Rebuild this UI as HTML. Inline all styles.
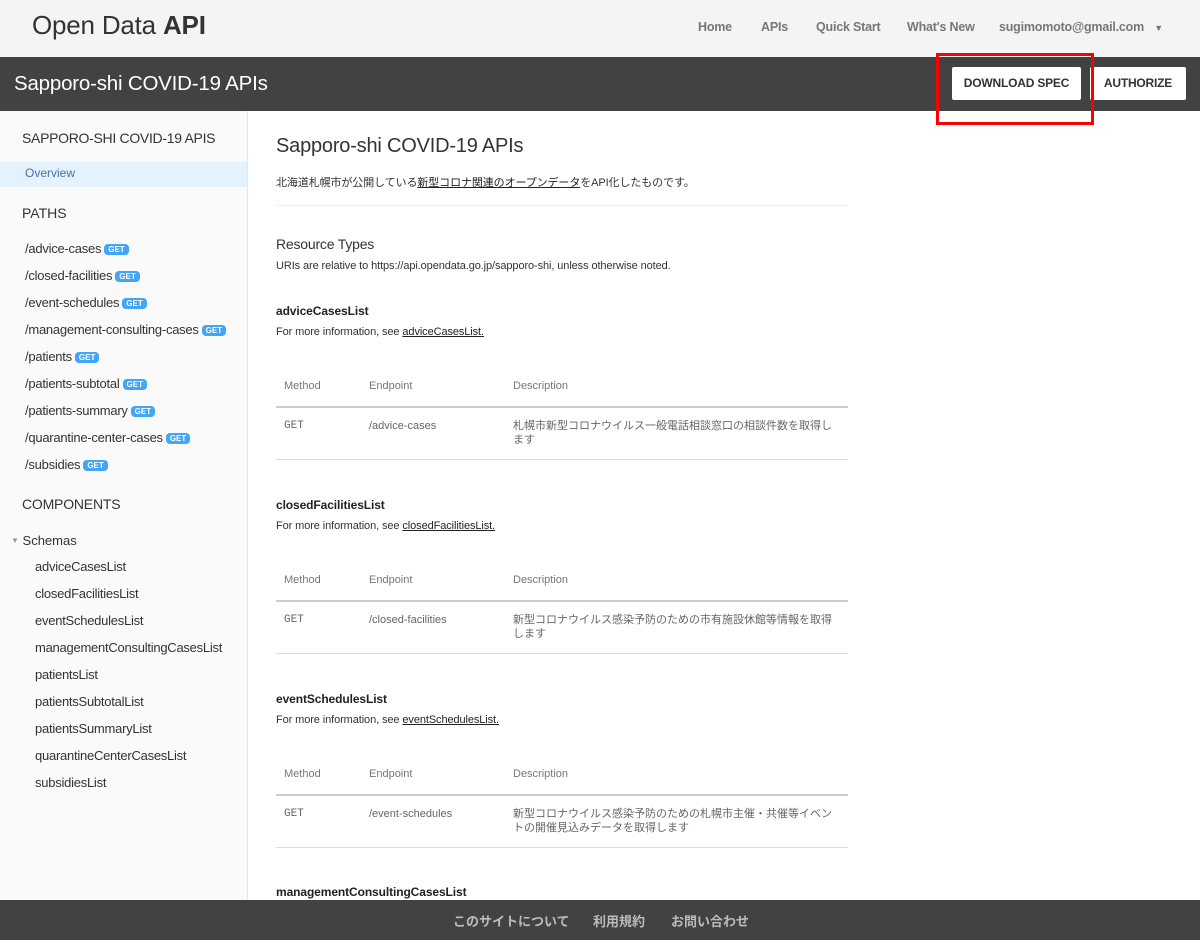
<!DOCTYPE html>
<html><head><meta charset="utf-8"><style>
*{margin:0;padding:0;box-sizing:border-box}
body{width:1200px;height:940px;overflow:hidden;background:#fff;font-family:"Liberation Sans","Noto Sans CJK JP",sans-serif;color:#333;position:relative}
.a{position:absolute;white-space:nowrap}
#top{position:absolute;left:0;top:0;width:1200px;height:57px;background:#f4f4f4}
#bar{position:absolute;left:0;top:57px;width:1200px;height:54px;background:#424242}
#side{position:absolute;left:0;top:111px;width:248px;height:789px;background:#fafafa;border-right:1px solid #e6e6e6}
#foot{position:absolute;left:0;top:900px;width:1200px;height:40px;background:#424242}
.nav{font-size:12.5px;font-weight:bold;color:#777;top:20px;letter-spacing:-0.2px}
.btn{position:absolute;top:67px;height:33px;background:#fff;border-radius:2px;font-size:12px;font-weight:bold;color:#333;text-align:center;line-height:33px;letter-spacing:-0.2px}
.p{font-size:13px;color:#333;left:25px;letter-spacing:-0.25px}
.g{display:inline-block;background:#42a5f5;color:#fff;font-size:8px;font-weight:bold;border-radius:4px;padding:1px 4px;margin-left:3px;vertical-align:1px;letter-spacing:0}
.s{font-size:13px;color:#333;left:35px;letter-spacing:-0.25px}
.h4{font-size:12px;font-weight:bold;color:#222;left:276px;letter-spacing:-0.1px}
.sm{font-size:11px;color:#333;left:276px;letter-spacing:-0.1px}
.sm u{color:#222}
.th{font-size:11px;color:#777}
.td{font-size:11px;color:#666}
.hr{position:absolute;left:276px;width:572px;height:1px;background:#ddd}
</style></head><body>
<div id="top"></div>
<div class="a" style="left:32px;top:10px;font-size:26px;color:#333;letter-spacing:-0.2px">Open Data <b>API</b></div>
<div class="a nav" style="left:698px">Home</div>
<div class="a nav" style="left:761px">APIs</div>
<div class="a nav" style="left:816px">Quick Start</div>
<div class="a nav" style="left:907px">What's New</div>
<div class="a nav" style="left:999px">sugimomoto@gmail.com <span style="font-size:9px;margin-left:7px">▼</span></div>
<div id="bar"></div>
<div class="a" style="left:14px;top:72px;font-size:20.5px;color:#fff;letter-spacing:-0.2px">Sapporo-shi COVID-19 APIs</div>
<div class="btn" style="left:952px;width:129px">DOWNLOAD SPEC</div>
<div class="btn" style="left:1090px;width:96px">AUTHORIZE</div>
<div style="position:absolute;left:936px;top:53px;width:158px;height:72px;border:3px solid #f00"></div>
<div id="side"></div>
<div class="a" style="left:22px;top:130px;font-size:14px;color:#333;letter-spacing:-0.3px">SAPPORO-SHI COVID-19 APIS</div>
<div style="position:absolute;left:0;top:162px;width:247px;height:25px;background:#e3f2fd"></div>
<div class="a" style="left:25px;top:166px;font-size:12px;color:#4a6fa5">Overview</div>
<div class="a" style="left:22px;top:205px;font-size:14px">PATHS</div>
<div class="a p" style="top:241px">/advice-cases<span class="g">GET</span></div>
<div class="a p" style="top:268px">/closed-facilities<span class="g">GET</span></div>
<div class="a p" style="top:295px">/event-schedules<span class="g">GET</span></div>
<div class="a p" style="top:322px">/management-consulting-cases<span class="g">GET</span></div>
<div class="a p" style="top:349px">/patients<span class="g">GET</span></div>
<div class="a p" style="top:376px">/patients-subtotal<span class="g">GET</span></div>
<div class="a p" style="top:403px">/patients-summary<span class="g">GET</span></div>
<div class="a p" style="top:430px">/quarantine-center-cases<span class="g">GET</span></div>
<div class="a p" style="top:457px">/subsidies<span class="g">GET</span></div>
<div class="a" style="left:22px;top:496px;font-size:14px;letter-spacing:-0.2px">COMPONENTS</div>
<div class="a" style="left:11px;top:533px;font-size:13px"><span style="font-size:8px;color:#999;vertical-align:2px">▼</span> Schemas</div>
<div class="a s" style="top:559px">adviceCasesList</div>
<div class="a s" style="top:586px">closedFacilitiesList</div>
<div class="a s" style="top:613px">eventSchedulesList</div>
<div class="a s" style="top:640px">managementConsultingCasesList</div>
<div class="a s" style="top:667px">patientsList</div>
<div class="a s" style="top:694px">patientsSubtotalList</div>
<div class="a s" style="top:721px">patientsSummaryList</div>
<div class="a s" style="top:748px">quarantineCenterCasesList</div>
<div class="a s" style="top:775px">subsidiesList</div>

<div class="a" style="left:276px;top:135px;font-size:20px;color:#333;letter-spacing:-0.2px">Sapporo-shi COVID-19 APIs</div>
<div class="a sm" style="top:174px">北海道札幌市が公開している<u>新型コロナ関連のオープンデータ</u>をAPI化したものです。</div>
<div class="hr" style="top:205px;background:#eee"></div>
<div class="a" style="left:276px;top:236px;font-size:14px;color:#333;letter-spacing:-0.2px">Resource Types</div>
<div class="a sm" style="top:260px">URIs are relative to https://api.opendata.go.jp/sapporo-shi, unless otherwise noted.</div>

<div class="a h4" style="top:304px">adviceCasesList</div>
<div class="a sm" style="top:326px">For more information, see <u>adviceCasesList.</u></div>
<div class="a th" style="left:284px;top:380px">Method</div><div class="a th" style="left:369px;top:380px">Endpoint</div><div class="a th" style="left:513px;top:380px">Description</div>
<div class="hr" style="top:406px;height:2px;background:#ccc"></div>
<div class="a td" style="left:284px;top:420px;font-family:'Liberation Mono',monospace">GET</div>
<div class="a td" style="left:369px;top:420px">/advice-cases</div>
<div class="a td" style="left:513px;top:419px;line-height:14px;white-space:normal;width:324px">札幌市新型コロナウイルス一般電話相談窓口の相談件数を取得します</div>
<div class="hr" style="top:459px"></div>

<div class="a h4" style="top:498px">closedFacilitiesList</div>
<div class="a sm" style="top:520px">For more information, see <u>closedFacilitiesList.</u></div>
<div class="a th" style="left:284px;top:574px">Method</div><div class="a th" style="left:369px;top:574px">Endpoint</div><div class="a th" style="left:513px;top:574px">Description</div>
<div class="hr" style="top:600px;height:2px;background:#ccc"></div>
<div class="a td" style="left:284px;top:614px;font-family:'Liberation Mono',monospace">GET</div>
<div class="a td" style="left:369px;top:614px">/closed-facilities</div>
<div class="a td" style="left:513px;top:613px;line-height:14px;white-space:normal;width:324px">新型コロナウイルス感染予防のための市有施設休館等情報を取得します</div>
<div class="hr" style="top:653px"></div>

<div class="a h4" style="top:692px">eventSchedulesList</div>
<div class="a sm" style="top:714px">For more information, see <u>eventSchedulesList.</u></div>
<div class="a th" style="left:284px;top:768px">Method</div><div class="a th" style="left:369px;top:768px">Endpoint</div><div class="a th" style="left:513px;top:768px">Description</div>
<div class="hr" style="top:794px;height:2px;background:#ccc"></div>
<div class="a td" style="left:284px;top:808px;font-family:'Liberation Mono',monospace">GET</div>
<div class="a td" style="left:369px;top:808px">/event-schedules</div>
<div class="a td" style="left:513px;top:807px;line-height:14px;white-space:normal;width:324px">新型コロナウイルス感染予防のための札幌市主催・共催等イベントの開催見込みデータを取得します</div>
<div class="hr" style="top:847px"></div>
<div class="a h4" style="top:885px">managementConsultingCasesList</div>

<div id="foot"></div>
<div class="a" style="left:453px;top:911px;font-size:13px;font-weight:bold;color:#bbb">このサイトについて</div>
<div class="a" style="left:593px;top:911px;font-size:13px;font-weight:bold;color:#bbb">利用規約</div>
<div class="a" style="left:671px;top:911px;font-size:13px;font-weight:bold;color:#bbb">お問い合わせ</div>
</body></html>
